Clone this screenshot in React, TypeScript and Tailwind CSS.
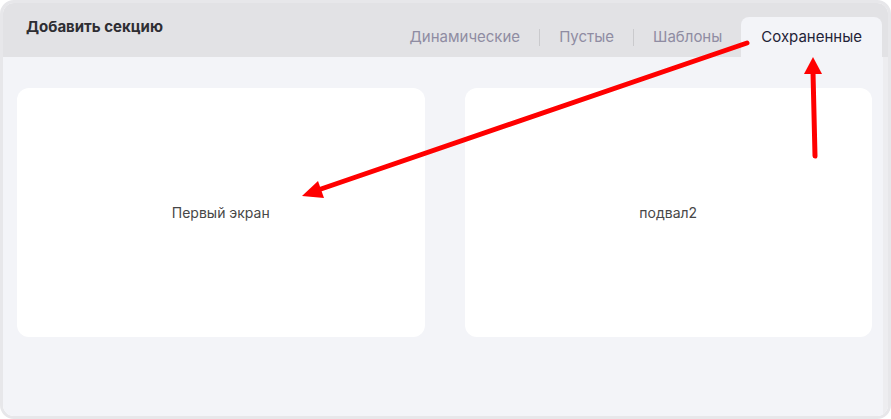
const tabs = ["Динамические", "Пустые", "Шаблоны", "Сохраненные"];
const active = 3;

const sections = ["Первый экран", "подвал2"];

export default function App() {
  return (
    <div className="w-[891px] h-[419px] bg-white font-['Inter',sans-serif]">
      <div className="relative w-full h-full border-[3px] border-[#e7e7ea] rounded-[14px] overflow-hidden flex flex-col">
        <div className="h-[54px] bg-[#e2e2e5] flex items-end justify-between pl-[23px] pr-[6px] shrink-0">
          <div className="self-start pt-[13px] text-[15px] font-bold text-[#2e2e33]">
            Добавить секцию
          </div>
          <div className="flex items-end">
            {tabs.map((tab, i) => (
              <div key={tab} className="flex items-center">
                {i > 0 && i !== active && i - 1 !== active && (
                  <span className="w-px h-[17px] bg-[#cacacd]" />
                )}
                <div
                  className={
                    i === active
                      ? "h-[40px] px-[20px] flex items-center rounded-t-[8px] bg-[#f3f4f8] text-[15px] text-[#1f2337]"
                      : "h-[40px] px-[19px] flex items-center text-[15px] text-[#8f8ca2]"
                  }
                >
                  {tab}
                </div>
              </div>
            ))}
          </div>
        </div>
        <div className="flex-1 flex bg-[#f3f4f8]">
          <div className="flex-1 grid grid-cols-2 gap-[40px] pt-[31px] pl-[14px] pr-[11px] items-start">
            {sections.map((name) => (
              <div
                key={name}
                className="h-[249px] bg-white rounded-[12px] flex items-center justify-center text-[14px] text-[#474747]"
              >
                {name}
              </div>
            ))}
          </div>
          <div className="w-[5px] bg-[#ededf0]" />
        </div>

        {/* annotation arrows */}
        <svg
          className="absolute -left-[3px] -top-[3px] pointer-events-none"
          width="891"
          height="419"
          viewBox="0 0 891 419"
        >
          <g stroke="#ff0000" strokeWidth="5" strokeLinecap="round" fill="#ff0000">
            <line x1="747" y1="43" x2="321" y2="189" />
            <polygon points="302,196 324,198 318,181" stroke="none" />
            <line x1="815" y1="156" x2="813" y2="72" />
            <polygon points="813,57 804,74 822,74" stroke="none" />
          </g>
        </svg>
      </div>
    </div>
  );
}
